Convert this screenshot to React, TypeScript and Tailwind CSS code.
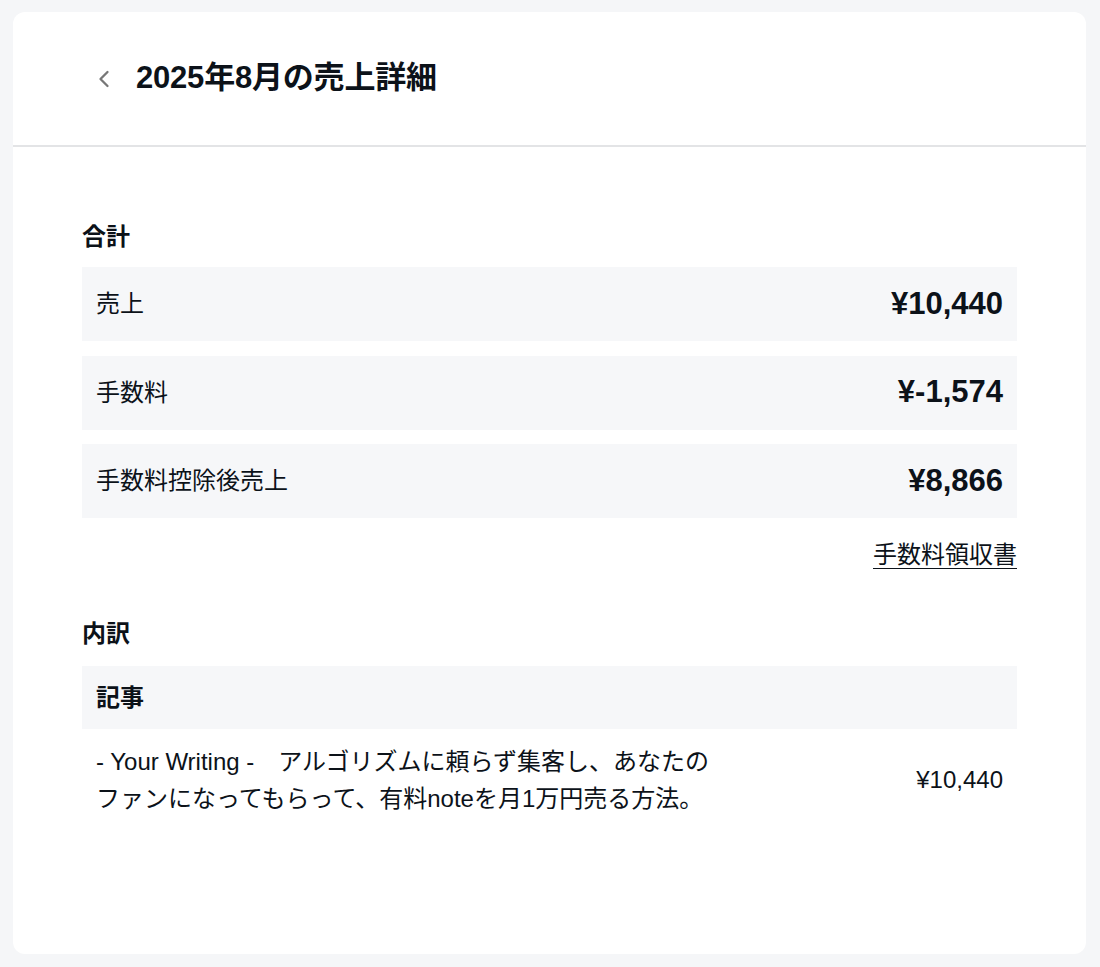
const rows = [
  { label: "売上", value: "¥10,440" },
  { label: "手数料", value: "¥-1,574" },
  { label: "手数料控除後売上", value: "¥8,866" },
]

const App = () => {
  return (
    <div
      className="min-h-[967px] bg-[#f5f6f8] pt-[12px] pl-[13px] pr-[14px] pb-[13px] text-[#0c1219]"
      style={{ fontFamily: '"Liberation Sans", "Noto Sans CJK JP", sans-serif' }}
    >
      <div className="h-[942px] rounded-[12px] bg-white overflow-hidden">
        <div className="h-[135px] flex items-center pl-[82px] border-b-2 border-[#e3e4e6]">
          <svg width="18" height="22" viewBox="0 0 18 22" className="mr-[23px]">
            <path d="M12.5 4 L5.5 11 L12.5 18" fill="none" stroke="#777" strokeWidth="2.3" strokeLinecap="round" strokeLinejoin="round" />
          </svg>
          <h1 className="text-[31px] font-bold tracking-[-0.2px]">2025年8月の売上詳細</h1>
        </div>

        <div className="px-[69px] pt-[78px]">
          <p className="text-[24px] font-bold leading-none">合計</p>
          <div className="mt-[18px] flex flex-col gap-[14.5px]">
            {rows.map((row) => (
              <div key={row.label} className="h-[74px] bg-[#f6f7f9] flex items-center justify-between px-[14px]">
                <span className="text-[24px]">{row.label}</span>
                <span className="text-[31px] font-bold">{row.value}</span>
              </div>
            ))}
          </div>
          <div className="flex justify-end mt-[25px]">
            <a className="text-[24px] leading-none underline underline-offset-[5px] decoration-1 cursor-pointer">手数料領収書</a>
          </div>

          <p className="mt-[55px] text-[24px] font-bold leading-none">内訳</p>
          <div className="mt-[20px] h-[63px] bg-[#f6f7f9] flex items-center px-[14px]">
            <span className="text-[24px] font-bold">記事</span>
          </div>
          <div className="flex items-center justify-between px-[14px] pt-[14px]">
            <p className="text-[24px] leading-[37px]">
              - Your Writing -　アルゴリズムに頼らず集客し、あなたの
              <br />
              ファンになってもらって、有料noteを月1万円売る方法。
            </p>
            <span className="text-[24px]">¥10,440</span>
          </div>
        </div>
      </div>
    </div>
  )
}

export default App
